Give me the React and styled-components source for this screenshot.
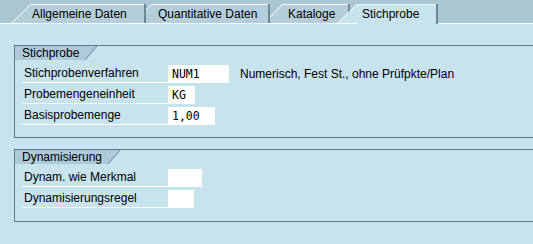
import React from 'react';
import styled, { createGlobalStyle } from 'styled-components';

const BAR = '#aac6d3';
const TAB = '#b4cfdb';
const PAGE = '#c6e3ee';
const LINE = '#5d7c8a';
const HEAD = '#aecad8';
const HILITE = '#eef6f9';

const GlobalStyle = createGlobalStyle`
  body {
    margin: 0;
    background: ${PAGE};
    overflow: hidden;
  }
`;

const Page = styled.div`
  width: 533px;
  height: 244px;
  overflow: hidden;
  background: ${PAGE};
  font-family: "Liberation Sans", Arial, sans-serif;
  font-size: 12px;
  color: #000;
`;

const TabBar = styled.div`
  display: flex;
  align-items: flex-end;
  height: 23px;
  padding-left: 12px;
  background: ${BAR};
  border-bottom: 1px solid #fff;
`;

const Tab = styled.div`
  position: relative;
  z-index: ${(p) => (p.$active ? 10 : p.$z)};
  box-sizing: border-box;
  width: ${(p) => p.$w}px;
  height: ${(p) => (p.$active ? 20 : 19)}px;
  margin-left: ${(p) => p.$ml}px;
  margin-bottom: ${(p) => (p.$active ? -1 : 0)}px;
  padding: 0 0 ${(p) => (p.$active ? 1 : 0)}px ${(p) => p.$pl}px;
  display: flex;
  align-items: center;
  white-space: nowrap;
  border-right: 2px solid #6a8897;
  background:
    linear-gradient(${HILITE}, ${HILITE}) top right / calc(100% - 19px) 1px no-repeat,
    linear-gradient(to bottom right, transparent calc(50% - 0.8px), ${HILITE} 50%, ${(p) => (p.$active ? PAGE : TAB)} calc(50% + 0.8px)) left top / 19px 19px no-repeat,
    linear-gradient(${(p) => (p.$active ? PAGE : TAB)}, ${(p) => (p.$active ? PAGE : TAB)}) right top / calc(100% - 19px) 100% no-repeat;
`;

const Content = styled.div`
  padding: 21px 0 0 14px;
`;

const Group = styled.section`
  width: 540px;
  margin-bottom: 11px;
  border: 1px solid ${LINE};
  border-right: none;
  padding-bottom: ${(p) => p.$pb}px;
`;

const GroupHead = styled.div`
  display: inline-block;
  height: 14px;
  line-height: 15px;
  padding: 0 18px 0 7px;
  vertical-align: top;
  background:
    linear-gradient(to bottom right, ${HEAD} calc(50% - 0.7px), ${LINE} 50%, transparent calc(50% + 0.7px)) right top / 12px 100% no-repeat,
    linear-gradient(${HEAD}, ${HEAD}) left top / calc(100% - 12px) 100% no-repeat;
`;

const Rows = styled.div`
  display: flex;
  flex-direction: column;
  gap: 3px;
  padding: 5px 0 0 7px;
`;

const Row = styled.div`
  display: flex;
  align-items: flex-start;
  height: 18px;
`;

const Label = styled.div`
  box-sizing: border-box;
  width: 146px;
  height: 18px;
  line-height: 17px;
  padding-left: 2px;
  border-bottom: 1px solid #fff;
`;

const Field = styled.div`
  box-sizing: border-box;
  width: ${(p) => p.$w}px;
  height: 18px;
  line-height: 18px;
  padding-left: 4px;
  background: #fff;
  font-family: "DejaVu Sans Mono", "Liberation Mono", monospace;
  font-size: 11.5px;
`;

const Note = styled.div`
  margin-left: 11px;
  line-height: 18px;
`;

const tabs = [
  { label: 'Allgemeine Daten', w: 134, ml: 0, z: 4, pl: 20 },
  { label: 'Quantitative Daten', w: 137, ml: -13, z: 3, pl: 25 },
  { label: 'Kataloge', w: 86, ml: -6, z: 2, pl: 24 },
  { label: 'Stichprobe', w: 100, ml: -12, z: 1, pl: 24, active: true },
];

export default function App() {
  return (
    <Page>
      <GlobalStyle />
      <TabBar>
        {tabs.map((t) => (
          <Tab key={t.label} $w={t.w} $ml={t.ml} $z={t.z} $pl={t.pl} $active={t.active}>
            {t.label}
          </Tab>
        ))}
      </TabBar>
      <Content>
        <Group $pb={12}>
          <GroupHead>Stichprobe</GroupHead>
          <Rows>
            <Row>
              <Label>Stichprobenverfahren</Label>
              <Field $w={61}>NUM1</Field>
              <Note>Numerisch, Fest St., ohne Prüfpkte/Plan</Note>
            </Row>
            <Row>
              <Label>Probemengeneinheit</Label>
              <Field $w={27}>KG</Field>
            </Row>
            <Row>
              <Label>Basisprobemenge</Label>
              <Field $w={47}>1,00</Field>
            </Row>
          </Rows>
        </Group>
        <Group $pb={13}>
          <GroupHead>Dynamisierung</GroupHead>
          <Rows>
            <Row>
              <Label>Dynam. wie Merkmal</Label>
              <Field $w={34} />
            </Row>
            <Row>
              <Label>Dynamisierungsregel</Label>
              <Field $w={26} />
            </Row>
          </Rows>
        </Group>
      </Content>
    </Page>
  );
}
